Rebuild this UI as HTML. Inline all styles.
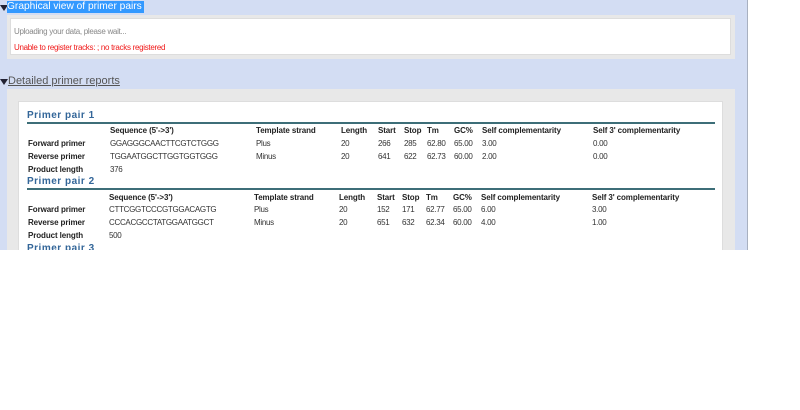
<!DOCTYPE html>
<html><head><style>
body{margin:0;width:800px;height:410px;background:#fff;font-family:"Liberation Sans",Arial,sans-serif;position:relative;overflow:hidden}
.a{position:absolute;white-space:nowrap}
#bg{position:absolute;left:0;top:0;width:747px;height:250px;background:#d3ddf3;border-right:1px solid #a8b0c0;overflow:hidden}
.t{font-size:8px;color:#333;letter-spacing:-0.3px}
.b{font-weight:bold;color:#222;letter-spacing:-0.1px}
.pp{font-size:10px;font-weight:bold;color:#336699;letter-spacing:0.5px}
.ln{position:absolute;left:27px;width:688px;height:2px;background:#3d6e78}
.tri{position:absolute;width:0;height:0;border-left:4px solid transparent;border-right:4px solid transparent;border-top:6px solid #223}
</style></head><body>
<div id="bg">
<div class="tri" style="left:0;top:5px"></div>
<div class="a" style="left:7px;top:1px;height:12px;width:137px;background:#3399ff;color:#fff;font-size:10.2px;line-height:12px">Graphical view of primer pairs</div>
<div class="a" style="left:7px;top:15px;width:728px;height:44px;background:#e8e8e8"></div>
<div class="a" style="left:10px;top:18px;width:721px;height:37px;background:#fff;border:1px solid #ddd;box-sizing:border-box"></div>
<div class="a t" style="left:14px;top:27px;color:#888">Uploading your data, please wait...</div>
<div class="a t" style="left:14px;top:43px;color:#f01818">Unable to register tracks: ; no tracks registered</div>
<div class="tri" style="left:0;top:79px"></div>
<div class="a" style="left:8px;top:75px;font-size:11px;color:#555;text-decoration:underline">Detailed primer reports</div>
<div class="a" style="left:7px;top:89px;width:728px;height:170px;background:#e8e8e8"></div>
<div class="a" style="left:18px;top:101px;width:705px;height:160px;background:#fff;border:1px solid #ddd;box-sizing:border-box"></div>

<div class="a pp" style="left:27px;top:110px">Primer pair 1</div>
<div class="ln" style="top:122px"></div>
<div class="a t b" style="left:110px;top:126px">Sequence (5'-&gt;3')</div>
<div class="a t b" style="left:256px;top:126px">Template strand</div>
<div class="a t b" style="left:341px;top:126px">Length</div>
<div class="a t b" style="left:378px;top:126px">Start</div>
<div class="a t b" style="left:404px;top:126px">Stop</div>
<div class="a t b" style="left:427px;top:126px">Tm</div>
<div class="a t b" style="left:454px;top:126px">GC%</div>
<div class="a t b" style="left:482px;top:126px">Self complementarity</div>
<div class="a t b" style="left:593px;top:126px">Self 3' complementarity</div>
<div class="a t b" style="left:28px;top:139px">Forward primer</div>
<div class="a t" style="left:110px;top:139px">GGAGGGCAACTTCGTCTGGG</div>
<div class="a t" style="left:256px;top:139px">Plus</div>
<div class="a t" style="left:341px;top:139px">20</div>
<div class="a t" style="left:378px;top:139px">266</div>
<div class="a t" style="left:404px;top:139px">285</div>
<div class="a t" style="left:427px;top:139px">62.80</div>
<div class="a t" style="left:454px;top:139px">65.00</div>
<div class="a t" style="left:482px;top:139px">3.00</div>
<div class="a t" style="left:593px;top:139px">0.00</div>
<div class="a t b" style="left:28px;top:152px">Reverse primer</div>
<div class="a t" style="left:110px;top:152px">TGGAATGGCTTGGTGGTGGG</div>
<div class="a t" style="left:256px;top:152px">Minus</div>
<div class="a t" style="left:341px;top:152px">20</div>
<div class="a t" style="left:378px;top:152px">641</div>
<div class="a t" style="left:404px;top:152px">622</div>
<div class="a t" style="left:427px;top:152px">62.73</div>
<div class="a t" style="left:454px;top:152px">60.00</div>
<div class="a t" style="left:482px;top:152px">2.00</div>
<div class="a t" style="left:593px;top:152px">0.00</div>
<div class="a t b" style="left:28px;top:165px">Product length</div>
<div class="a t" style="left:110px;top:165px">376</div>

<div class="a pp" style="left:27px;top:176px">Primer pair 2</div>
<div class="ln" style="top:188px"></div>
<div class="a t b" style="left:109px;top:193px">Sequence (5'-&gt;3')</div>
<div class="a t b" style="left:254px;top:193px">Template strand</div>
<div class="a t b" style="left:339px;top:193px">Length</div>
<div class="a t b" style="left:377px;top:193px">Start</div>
<div class="a t b" style="left:402px;top:193px">Stop</div>
<div class="a t b" style="left:426px;top:193px">Tm</div>
<div class="a t b" style="left:453px;top:193px">GC%</div>
<div class="a t b" style="left:481px;top:193px">Self complementarity</div>
<div class="a t b" style="left:592px;top:193px">Self 3' complementarity</div>
<div class="a t b" style="left:28px;top:205px">Forward primer</div>
<div class="a t" style="left:109px;top:205px">CTTCGGTCCCGTGGACAGTG</div>
<div class="a t" style="left:254px;top:205px">Plus</div>
<div class="a t" style="left:339px;top:205px">20</div>
<div class="a t" style="left:377px;top:205px">152</div>
<div class="a t" style="left:402px;top:205px">171</div>
<div class="a t" style="left:426px;top:205px">62.77</div>
<div class="a t" style="left:453px;top:205px">65.00</div>
<div class="a t" style="left:481px;top:205px">6.00</div>
<div class="a t" style="left:592px;top:205px">3.00</div>
<div class="a t b" style="left:28px;top:218px">Reverse primer</div>
<div class="a t" style="left:109px;top:218px">CCCACGCCTATGGAATGGCT</div>
<div class="a t" style="left:254px;top:218px">Minus</div>
<div class="a t" style="left:339px;top:218px">20</div>
<div class="a t" style="left:377px;top:218px">651</div>
<div class="a t" style="left:402px;top:218px">632</div>
<div class="a t" style="left:426px;top:218px">62.34</div>
<div class="a t" style="left:453px;top:218px">60.00</div>
<div class="a t" style="left:481px;top:218px">4.00</div>
<div class="a t" style="left:592px;top:218px">1.00</div>
<div class="a t b" style="left:28px;top:231px">Product length</div>
<div class="a t" style="left:109px;top:231px">500</div>
<div class="a pp" style="left:27px;top:243px">Primer pair 3</div>
</div>
</body></html>
